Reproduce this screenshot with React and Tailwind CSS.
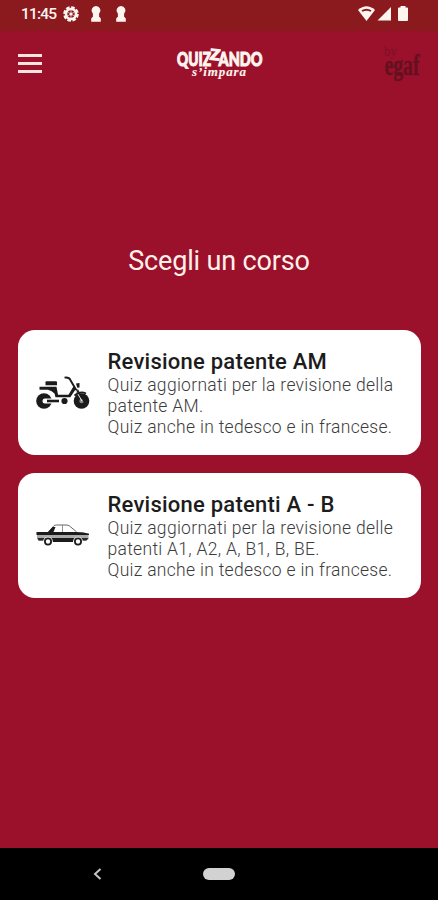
const MopedIcon = () => (
  <svg viewBox="0 0 54 34" className="h-[34px] w-[54px]" fill="none" stroke="#1b1b1b">
    <circle cx="8" cy="25" r="7.8" fill="#1b1b1b" stroke="none" />
    <circle cx="45.5" cy="25" r="7.8" fill="#1b1b1b" stroke="none" />
    <circle cx="45.5" cy="25" r="2.2" fill="#888" stroke="none" />
    <path d="M9 22.500h8v5h-8a2.500 2.500 0 0 1 0-5z" fill="#fff" stroke="none" />
    <path d="M11 25h12" strokeWidth="2.600" />
    <circle cx="28.500" cy="25" r="3.100" fill="#1b1b1b" stroke="none" />
    <path d="M10.500 5.200h9.500q1 0 1 1v3H9.500v-3q0-1 1-1z" fill="#1b1b1b" stroke="none" />
    <path d="M3.500 10.700H20.500L22 18.800H32.500L38 9.500L39.500 13.500L34.300 21.300H19.500L18.500 17.500Q16 14.800 12 13.800H3.500z" fill="#1b1b1b" stroke="none" />
    <path d="M28.500 1.600Q33 .8 34.500 4.200L44 20.500" strokeWidth="1.900" />
    <path d="M39.500 14L46 25" stroke="#fff" strokeWidth=".9" />
    <path d="M41.500 13.500L48 25.500" strokeWidth="1.100" />
    <path d="M40 7.500L43.500 7V11.500L41.300 11.800z" fill="#1b1b1b" stroke="none" />
    <path d="M38.500 19.500Q44 14.500 50 17.500" strokeWidth="1.800" />
  </svg>
);

const CarIcon = () => (
  <svg viewBox="0 0 54 24" className="h-[24px] w-[54px]" fill="none">
    <path d="M12.500 8L18 1.700Q19 1 20.500 1H30Q32 1 33.500 2L40.500 7.800" stroke="#666" strokeWidth="1" />
    <path d="M26.500 1V8" stroke="#777" strokeWidth=".8" />
    <path d="M12 8L16.500 3H19.500L17.500 8z" fill="#1b1b1b" />
    <path d="M1 8H40Q48 8.200 52.500 9.700V15Q51 17 48 17H3L1 14.500z" fill="#aaa" />
    <path d="M.5 8H40Q48 8.200 53 9.700V11H.5z" fill="#1b1b1b" />
    <path d="M1.500 14H52.500L50.500 16.500H2.500z" fill="#292929" />
    <path d="M16 14H37V18H16z" fill="#1b1b1b" />
    <circle cx="12" cy="17.500" r="4.800" fill="#fff" />
    <circle cx="42" cy="17.500" r="4.800" fill="#fff" />
    <circle cx="12" cy="17.500" r="3.100" stroke="#1b1b1b" strokeWidth="1.800" />
    <circle cx="42" cy="17.500" r="3.100" stroke="#1b1b1b" strokeWidth="1.800" />
  </svg>
);

const KeyholeIcon = () => (
  <svg viewBox="0 0 10 16" className="h-4 w-2.5" fill="#fff5ef">
    <path d="M5 0a4.300 4.300 0 0 1 3.200 7.200L8 10.500 9.800 12.500V15.800H.2V12.500L2 10.500 1.800 7.200A4.300 4.300 0 0 1 5 0z" />
  </svg>
);

const GearIcon = () => (
  <svg viewBox="0 0 16 16" className="h-4 w-4" fill="none" stroke="#fff5ef">
    <circle cx="8" cy="8" r="6.600" strokeWidth="2.400" strokeDasharray="3.600 1.580" />
    <circle cx="8" cy="8" r="5" strokeWidth="2.600" />
    <circle cx="8" cy="8" r="1.500" fill="#fff5ef" stroke="none" />
    <path d="M8 3v10M3.700 5.500l8.600 5M3.700 10.500l8.600-5" strokeWidth=".6" />
  </svg>
);

const StatusBar = () => (
  <div className="flex h-[31px] shrink-0 items-start justify-between bg-[#8b1a1f] pl-[21px] pr-[29px] pt-1.5">
    <div className="flex items-center">
      <span className="w-[42px] text-[15.500px] font-medium leading-4 tracking-[-0.800px] text-[#fff5ef]">11:45</span>
      <GearIcon />
      <div className="ml-3 flex gap-[15px]">
        <KeyholeIcon />
        <KeyholeIcon />
      </div>
    </div>
    <svg viewBox="0 0 51 16" className="h-4 w-[51px]" fill="#fff5ef">
      <path d="M0 4Q8.500-3.500 17 4L8.500 15z" />
      <path d="M3.500 4.300Q8.500 1 13.500 4.300L12.500 5.800Q8.500 3.500 4.500 5.800z" fill="#8b1a1f" />
      <path d="M33 1V14.500H19.500z" />
      <path d="M42.500 0h5v1.500h1.600q.9 0 .9.900v11.700q0 .9-.9.900h-8.200q-.9 0-.9-.9V2.400q0-.9.9-.9h1.600z" />
    </svg>
  </div>
);

const Header = () => (
  <div className="flex h-[63px] shrink-0 items-center justify-between pl-[18px] pr-[17px] pt-0.5">
    <button type="button" className="flex w-6 flex-col gap-[5px]">
      <span className="h-[3px] w-6 bg-[#fbe3df]" />
      <span className="h-[3px] w-6 bg-[#fbe3df]" />
      <span className="h-[3px] w-6 bg-[#fbe3df]" />
    </button>
    <svg viewBox="0 0 90 40" className="ml-3.5 h-10 w-[90px] overflow-visible" fill="#fff5ef" stroke="#fff5ef">
      <g fontFamily="Lato, sans-serif" fontWeight="900" strokeWidth="1">
        <text x="2" y="22" fontSize="18" textLength="34" lengthAdjust="spacingAndGlyphs">QUIZ</text>
        <text x="35" y="16" fontSize="15" textLength="10" lengthAdjust="spacingAndGlyphs" transform="rotate(6 40 12)">Z</text>
        <text x="43.500" y="22" fontSize="18" textLength="44" lengthAdjust="spacingAndGlyphs">ANDO</text>
      </g>
      <text x="17" y="31.500" fontFamily="'Liberation Serif', serif" fontStyle="italic" fontWeight="700" fontSize="13" strokeWidth=".1" textLength="54" lengthAdjust="spacing">s’impara</text>
    </svg>
    <svg viewBox="0 0 38 40" className="h-10 w-[38px] overflow-visible" fill="#64101f" fontFamily="'Liberation Serif', serif">
      <text x="1" y="11.500" fontSize="14" fill="#7c1023" textLength="13" lengthAdjust="spacingAndGlyphs">by</text>
      <text x="1.500" y="31" fontSize="29" fontWeight="700" stroke="#64101f" strokeWidth=".4" textLength="35" lengthAdjust="spacingAndGlyphs">egaf</text>
    </svg>
  </div>
);

const courses = [
  {
    title: 'Revisione patente AM',
    lines: ['Quiz aggiornati per la revisione della', 'patente AM.', 'Quiz anche in tedesco e in francese.'],
    Icon: MopedIcon,
  },
  {
    title: 'Revisione patenti A - B',
    lines: ['Quiz aggiornati per la revisione delle', 'patenti A1, A2, A, B1, B, BE.', 'Quiz anche in tedesco e in francese.'],
    Icon: CarIcon,
  },
];

const CourseCard = ({ course }) => {
  const { title, lines, Icon } = course;
  return (
    <button type="button" className="flex h-[125px] w-full items-center rounded-[17px] bg-white pl-[18px] text-left">
      <div className="flex w-[54px] shrink-0 justify-center">
        <Icon />
      </div>
      <div className="ml-[18px] whitespace-nowrap pt-0.5">
        <h2 className="mb-px text-[22px] font-medium leading-[25px] tracking-[0.230px] text-[#1c1c1c]">{title}</h2>
        {lines.map((line) => (
          <p key={line} className="text-[17.500px] font-light leading-[21px] tracking-[0.300px] text-[#3c3c3c]">{line}</p>
        ))}
      </div>
    </button>
  );
};

const App = () => {
  return (
    <div className="flex h-screen w-full flex-col overflow-hidden bg-[#9b112c] font-['Roboto',sans-serif]">
      <StatusBar />
      <Header />

      <main className="flex flex-1 flex-col px-[17.500px] pt-[151px]">
        <h1 className="text-center text-[27px] leading-8 tracking-[-0.150px] text-[#fff0ea]">Scegli un corso</h1>
        <div className="mt-[53px] flex flex-col gap-[18px]">
          {courses.map((course) => (
            <CourseCard key={course.title} course={course} />
          ))}
        </div>
      </main>

      {/* Android navigation bar */}
      <div className="flex h-[52px] shrink-0 items-center bg-black pl-[93px]">
        <svg viewBox="0 0 9 12" className="h-3 w-[9px]" fill="none" stroke="#c4c4c4" strokeWidth="2">
          <path d="M7.500 1L2 6l5.500 5" />
        </svg>
        <div className="ml-[101px] h-3 w-8 rounded-full bg-[#d2d2d2]" />
      </div>
    </div>
  );
};

export default App;
